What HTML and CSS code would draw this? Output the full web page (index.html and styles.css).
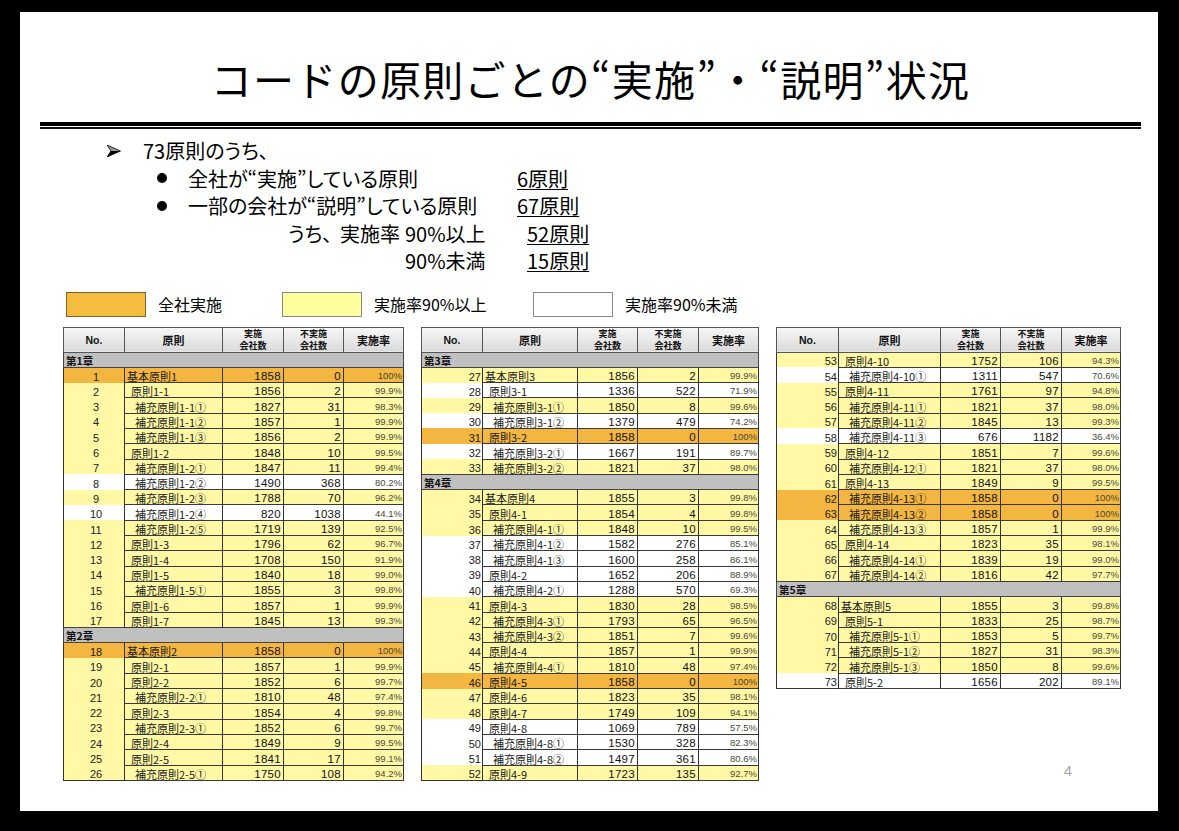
FILE: index.html
```html
<!DOCTYPE html>
<html lang="ja">
<head>
<meta charset="utf-8">
<title>コードの原則ごとの“実施”・“説明”状況</title>
<link rel="stylesheet" href="styles.css">
</head>
<body>
<div class="slide">
  <h1 class="title">コードの原則ごとの“実施”・“説明”状況</h1>
  <div class="rule"><div class="rule-thick"></div><div class="rule-thin"></div></div>

  <div class="summary">
    <div class="line l1"><span class="arrow"><svg width="14" height="12" viewBox="0 0 14 12" aria-hidden="true"><polygon points="0,0 13.5,6 4,6" fill="#9a9a9a"/><polygon points="4,6 13.5,6 0,12" fill="#000"/><polyline points="0,0 13.5,6 0,12 4,6 0,0" fill="none" stroke="#000" stroke-width="0.8"/></svg></span><span>73原則のうち、</span></div>
    <div class="line l2"><span class="dot"></span><span class="lbl">全社が“実施”している原則</span><span class="val">6原則</span></div>
    <div class="line l2"><span class="dot"></span><span class="lbl">一部の会社が“説明”している原則</span><span class="val">67原則</span></div>
    <div class="line l4"><span class="c1">うち、</span><span class="c2">実施率</span><span class="c3">90%以上</span><span class="val">52原則</span></div>
    <div class="line l5"><span class="c3">90%未満</span><span class="val">15原則</span></div>
  </div>

  <div class="legend">
    <div class="lg-item lg1"><span class="box box-o"></span><span class="lg-text">全社実施</span></div>
    <div class="lg-item lg2"><span class="box box-y"></span><span class="lg-text">実施率90%以上</span></div>
    <div class="lg-item lg3"><span class="box box-w"></span><span class="lg-text">実施率90%未満</span></div>
  </div>

  <div class="tables">
    <table class="tbl t1">
      <colgroup><col style="width:61px"><col style="width:98px"><col style="width:61px"><col style="width:60px"><col style="width:60px"></colgroup>
      <thead><tr><th class="h-no">No.</th><th class="h-nm">原則</th><th>実施<br>会社数</th><th>不実施<br>会社数</th><th class="h-rt">実施率</th></tr></thead>
      <tbody>
        <tr class="ch"><td colspan="5">第1章</td></tr>
        <tr class="o"><td class="no">1</td><td class="nm n0">基本原則1</td><td class="num">1858</td><td class="num">0</td><td class="pct">100%</td></tr>
        <tr class="y"><td class="no">2</td><td class="nm n1">原則1-1</td><td class="num">1856</td><td class="num">2</td><td class="pct">99.9%</td></tr>
        <tr class="y"><td class="no">3</td><td class="nm n2">補充原則1-1①</td><td class="num">1827</td><td class="num">31</td><td class="pct">98.3%</td></tr>
        <tr class="y"><td class="no">4</td><td class="nm n2">補充原則1-1②</td><td class="num">1857</td><td class="num">1</td><td class="pct">99.9%</td></tr>
        <tr class="y"><td class="no">5</td><td class="nm n2">補充原則1-1③</td><td class="num">1856</td><td class="num">2</td><td class="pct">99.9%</td></tr>
        <tr class="y"><td class="no">6</td><td class="nm n1">原則1-2</td><td class="num">1848</td><td class="num">10</td><td class="pct">99.5%</td></tr>
        <tr class="y"><td class="no">7</td><td class="nm n2">補充原則1-2①</td><td class="num">1847</td><td class="num">11</td><td class="pct">99.4%</td></tr>
        <tr class="w"><td class="no">8</td><td class="nm n2">補充原則1-2②</td><td class="num">1490</td><td class="num">368</td><td class="pct">80.2%</td></tr>
        <tr class="y"><td class="no">9</td><td class="nm n2">補充原則1-2③</td><td class="num">1788</td><td class="num">70</td><td class="pct">96.2%</td></tr>
        <tr class="w"><td class="no">10</td><td class="nm n2">補充原則1-2④</td><td class="num">820</td><td class="num">1038</td><td class="pct">44.1%</td></tr>
        <tr class="y"><td class="no">11</td><td class="nm n2">補充原則1-2⑤</td><td class="num">1719</td><td class="num">139</td><td class="pct">92.5%</td></tr>
        <tr class="y"><td class="no">12</td><td class="nm n1">原則1-3</td><td class="num">1796</td><td class="num">62</td><td class="pct">96.7%</td></tr>
        <tr class="y"><td class="no">13</td><td class="nm n1">原則1-4</td><td class="num">1708</td><td class="num">150</td><td class="pct">91.9%</td></tr>
        <tr class="y"><td class="no">14</td><td class="nm n1">原則1-5</td><td class="num">1840</td><td class="num">18</td><td class="pct">99.0%</td></tr>
        <tr class="y"><td class="no">15</td><td class="nm n2">補充原則1-5①</td><td class="num">1855</td><td class="num">3</td><td class="pct">99.8%</td></tr>
        <tr class="y"><td class="no">16</td><td class="nm n1">原則1-6</td><td class="num">1857</td><td class="num">1</td><td class="pct">99.9%</td></tr>
        <tr class="y"><td class="no">17</td><td class="nm n1">原則1-7</td><td class="num">1845</td><td class="num">13</td><td class="pct">99.3%</td></tr>
        <tr class="ch"><td colspan="5">第2章</td></tr>
        <tr class="o"><td class="no">18</td><td class="nm n0">基本原則2</td><td class="num">1858</td><td class="num">0</td><td class="pct">100%</td></tr>
        <tr class="y"><td class="no">19</td><td class="nm n1">原則2-1</td><td class="num">1857</td><td class="num">1</td><td class="pct">99.9%</td></tr>
        <tr class="y"><td class="no">20</td><td class="nm n1">原則2-2</td><td class="num">1852</td><td class="num">6</td><td class="pct">99.7%</td></tr>
        <tr class="y"><td class="no">21</td><td class="nm n2">補充原則2-2①</td><td class="num">1810</td><td class="num">48</td><td class="pct">97.4%</td></tr>
        <tr class="y"><td class="no">22</td><td class="nm n1">原則2-3</td><td class="num">1854</td><td class="num">4</td><td class="pct">99.8%</td></tr>
        <tr class="y"><td class="no">23</td><td class="nm n2">補充原則2-3①</td><td class="num">1852</td><td class="num">6</td><td class="pct">99.7%</td></tr>
        <tr class="y"><td class="no">24</td><td class="nm n1">原則2-4</td><td class="num">1849</td><td class="num">9</td><td class="pct">99.5%</td></tr>
        <tr class="y"><td class="no">25</td><td class="nm n1">原則2-5</td><td class="num">1841</td><td class="num">17</td><td class="pct">99.1%</td></tr>
        <tr class="y"><td class="no">26</td><td class="nm n2">補充原則2-5①</td><td class="num">1750</td><td class="num">108</td><td class="pct">94.2%</td></tr>
      </tbody>
    </table>

    <table class="tbl t2">
      <colgroup><col style="width:61px"><col style="width:95px"><col style="width:60px"><col style="width:61px"><col style="width:60px"></colgroup>
      <thead><tr><th class="h-no">No.</th><th class="h-nm">原則</th><th>実施<br>会社数</th><th>不実施<br>会社数</th><th class="h-rt">実施率</th></tr></thead>
      <tbody>
        <tr class="ch"><td colspan="5">第3章</td></tr>
        <tr class="y"><td class="no">27</td><td class="nm n0">基本原則3</td><td class="num">1856</td><td class="num">2</td><td class="pct">99.9%</td></tr>
        <tr class="w"><td class="no">28</td><td class="nm n1">原則3-1</td><td class="num">1336</td><td class="num">522</td><td class="pct">71.9%</td></tr>
        <tr class="y"><td class="no">29</td><td class="nm n2">補充原則3-1①</td><td class="num">1850</td><td class="num">8</td><td class="pct">99.6%</td></tr>
        <tr class="w"><td class="no">30</td><td class="nm n2">補充原則3-1②</td><td class="num">1379</td><td class="num">479</td><td class="pct">74.2%</td></tr>
        <tr class="o"><td class="no">31</td><td class="nm n1">原則3-2</td><td class="num">1858</td><td class="num">0</td><td class="pct">100%</td></tr>
        <tr class="w"><td class="no">32</td><td class="nm n2">補充原則3-2①</td><td class="num">1667</td><td class="num">191</td><td class="pct">89.7%</td></tr>
        <tr class="y"><td class="no">33</td><td class="nm n2">補充原則3-2②</td><td class="num">1821</td><td class="num">37</td><td class="pct">98.0%</td></tr>
        <tr class="ch"><td colspan="5">第4章</td></tr>
        <tr class="y"><td class="no">34</td><td class="nm n0">基本原則4</td><td class="num">1855</td><td class="num">3</td><td class="pct">99.8%</td></tr>
        <tr class="y"><td class="no">35</td><td class="nm n1">原則4-1</td><td class="num">1854</td><td class="num">4</td><td class="pct">99.8%</td></tr>
        <tr class="y"><td class="no">36</td><td class="nm n2">補充原則4-1①</td><td class="num">1848</td><td class="num">10</td><td class="pct">99.5%</td></tr>
        <tr class="w"><td class="no">37</td><td class="nm n2">補充原則4-1②</td><td class="num">1582</td><td class="num">276</td><td class="pct">85.1%</td></tr>
        <tr class="w"><td class="no">38</td><td class="nm n2">補充原則4-1③</td><td class="num">1600</td><td class="num">258</td><td class="pct">86.1%</td></tr>
        <tr class="w"><td class="no">39</td><td class="nm n1">原則4-2</td><td class="num">1652</td><td class="num">206</td><td class="pct">88.9%</td></tr>
        <tr class="w"><td class="no">40</td><td class="nm n2">補充原則4-2①</td><td class="num">1288</td><td class="num">570</td><td class="pct">69.3%</td></tr>
        <tr class="y"><td class="no">41</td><td class="nm n1">原則4-3</td><td class="num">1830</td><td class="num">28</td><td class="pct">98.5%</td></tr>
        <tr class="y"><td class="no">42</td><td class="nm n2">補充原則4-3①</td><td class="num">1793</td><td class="num">65</td><td class="pct">96.5%</td></tr>
        <tr class="y"><td class="no">43</td><td class="nm n2">補充原則4-3②</td><td class="num">1851</td><td class="num">7</td><td class="pct">99.6%</td></tr>
        <tr class="y"><td class="no">44</td><td class="nm n1">原則4-4</td><td class="num">1857</td><td class="num">1</td><td class="pct">99.9%</td></tr>
        <tr class="y"><td class="no">45</td><td class="nm n2">補充原則4-4①</td><td class="num">1810</td><td class="num">48</td><td class="pct">97.4%</td></tr>
        <tr class="o"><td class="no">46</td><td class="nm n1">原則4-5</td><td class="num">1858</td><td class="num">0</td><td class="pct">100%</td></tr>
        <tr class="y"><td class="no">47</td><td class="nm n1">原則4-6</td><td class="num">1823</td><td class="num">35</td><td class="pct">98.1%</td></tr>
        <tr class="y"><td class="no">48</td><td class="nm n1">原則4-7</td><td class="num">1749</td><td class="num">109</td><td class="pct">94.1%</td></tr>
        <tr class="w"><td class="no">49</td><td class="nm n1">原則4-8</td><td class="num">1069</td><td class="num">789</td><td class="pct">57.5%</td></tr>
        <tr class="w"><td class="no">50</td><td class="nm n2">補充原則4-8①</td><td class="num">1530</td><td class="num">328</td><td class="pct">82.3%</td></tr>
        <tr class="w"><td class="no">51</td><td class="nm n2">補充原則4-8②</td><td class="num">1497</td><td class="num">361</td><td class="pct">80.6%</td></tr>
        <tr class="y"><td class="no">52</td><td class="nm n1">原則4-9</td><td class="num">1723</td><td class="num">135</td><td class="pct">92.7%</td></tr>
      </tbody>
    </table>

    <div class="col3">
      <table class="tbl t3">
        <colgroup><col style="width:62px"><col style="width:102px"><col style="width:60px"><col style="width:61px"><col style="width:59px"></colgroup>
        <thead><tr><th class="h-no">No.</th><th class="h-nm">原則</th><th>実施<br>会社数</th><th>不実施<br>会社数</th><th class="h-rt">実施率</th></tr></thead>
        <tbody>
          <tr class="y"><td class="no">53</td><td class="nm n1">原則4-10</td><td class="num">1752</td><td class="num">106</td><td class="pct">94.3%</td></tr>
          <tr class="w"><td class="no">54</td><td class="nm n2">補充原則4-10①</td><td class="num">1311</td><td class="num">547</td><td class="pct">70.6%</td></tr>
          <tr class="y"><td class="no">55</td><td class="nm n1">原則4-11</td><td class="num">1761</td><td class="num">97</td><td class="pct">94.8%</td></tr>
          <tr class="y"><td class="no">56</td><td class="nm n2">補充原則4-11①</td><td class="num">1821</td><td class="num">37</td><td class="pct">98.0%</td></tr>
          <tr class="y"><td class="no">57</td><td class="nm n2">補充原則4-11②</td><td class="num">1845</td><td class="num">13</td><td class="pct">99.3%</td></tr>
          <tr class="w"><td class="no">58</td><td class="nm n2">補充原則4-11③</td><td class="num">676</td><td class="num">1182</td><td class="pct">36.4%</td></tr>
          <tr class="y"><td class="no">59</td><td class="nm n1">原則4-12</td><td class="num">1851</td><td class="num">7</td><td class="pct">99.6%</td></tr>
          <tr class="y"><td class="no">60</td><td class="nm n2">補充原則4-12①</td><td class="num">1821</td><td class="num">37</td><td class="pct">98.0%</td></tr>
          <tr class="y"><td class="no">61</td><td class="nm n1">原則4-13</td><td class="num">1849</td><td class="num">9</td><td class="pct">99.5%</td></tr>
          <tr class="o"><td class="no">62</td><td class="nm n2">補充原則4-13①</td><td class="num">1858</td><td class="num">0</td><td class="pct">100%</td></tr>
          <tr class="o"><td class="no">63</td><td class="nm n2">補充原則4-13②</td><td class="num">1858</td><td class="num">0</td><td class="pct">100%</td></tr>
          <tr class="y"><td class="no">64</td><td class="nm n2">補充原則4-13③</td><td class="num">1857</td><td class="num">1</td><td class="pct">99.9%</td></tr>
          <tr class="y"><td class="no">65</td><td class="nm n1">原則4-14</td><td class="num">1823</td><td class="num">35</td><td class="pct">98.1%</td></tr>
          <tr class="y"><td class="no">66</td><td class="nm n2">補充原則4-14①</td><td class="num">1839</td><td class="num">19</td><td class="pct">99.0%</td></tr>
          <tr class="y"><td class="no">67</td><td class="nm n2">補充原則4-14②</td><td class="num">1816</td><td class="num">42</td><td class="pct">97.7%</td></tr>
          <tr class="ch"><td colspan="5">第5章</td></tr>
          <tr class="y"><td class="no">68</td><td class="nm n0">基本原則5</td><td class="num">1855</td><td class="num">3</td><td class="pct">99.8%</td></tr>
          <tr class="y"><td class="no">69</td><td class="nm n1">原則5-1</td><td class="num">1833</td><td class="num">25</td><td class="pct">98.7%</td></tr>
          <tr class="y"><td class="no">70</td><td class="nm n2">補充原則5-1①</td><td class="num">1853</td><td class="num">5</td><td class="pct">99.7%</td></tr>
          <tr class="y"><td class="no">71</td><td class="nm n2">補充原則5-1②</td><td class="num">1827</td><td class="num">31</td><td class="pct">98.3%</td></tr>
          <tr class="y"><td class="no">72</td><td class="nm n2">補充原則5-1③</td><td class="num">1850</td><td class="num">8</td><td class="pct">99.6%</td></tr>
          <tr class="w"><td class="no">73</td><td class="nm n1">原則5-2</td><td class="num">1656</td><td class="num">202</td><td class="pct">89.1%</td></tr>
        </tbody>
      </table>
      <div class="pgnum">4</div>
    </div>
  </div>
</div>
</body>
</html>
```

FILE: styles.css
```css
html, body {
  margin: 0;
  padding: 0;
}
body {
  background: #000;
  width: 1179px;
  height: 831px;
  overflow: hidden;
}
.slide {
  margin: 12px 0 0 20px;
  width: 1138px;
  height: 799px;
  background: #fff;
  box-sizing: border-box;
  padding: 42px 17px 0 20px;
  display: flex;
  flex-direction: column;
  font-family: "Noto Sans CJK JP", sans-serif;
  color: #000;
}
.title {
  margin: 0;
  font-size: 41px;
  line-height: 48px;
  font-weight: 400;
  text-align: center;
  letter-spacing: 1.3px;
}
.rule {
  margin-top: 20px;
}
.rule-thick {
  height: 4px;
  background: #000;
}
.rule-thin {
  height: 1.5px;
  margin-top: 1px;
  background: #111;
}

/* summary bullets */
.summary {
  margin-top: 8.5px;
  font-size: 20px;
  line-height: 27.5px;
  font-feature-settings: "palt";
}
.line {
  display: flex;
  align-items: center;
  white-space: nowrap;
  height: 27.5px;
}
.line > span { flex-shrink: 0; }
.l1 { padding-left: 67px; }
.arrow {
  width: 36px;
  display: flex;
  align-items: center;
}
.arrow svg { display: block; }
.l2 { padding-left: 117px; }
.dot {
  width: 10px;
  height: 10px;
  border-radius: 50%;
  background: #000;
  margin-right: 21px;
}
.lbl { width: 329px; }
.val { text-decoration: underline; text-decoration-thickness: 1px; text-underline-offset: 2px; }
.l4 { padding-left: 248px; }
.c1 { width: 52px; }
.c2 { width: 65px; }
.c3 { width: 122px; }
.l5 { padding-left: 365px; }

/* legend */
.legend {
  margin-top: 17px;
  display: flex;
  padding-left: 26px;
  height: 25px;
  align-items: center;
  font-size: 16px;
}
.lg-item {
  display: flex;
  align-items: center;
}
.lg1 { width: 216px; }
.lg2 { width: 251px; }
.box {
  width: 80px;
  height: 25px;
  box-sizing: border-box;
  border: 1.5px solid #777;
}
.box-o { background: #f4bd3d; border-color: #7a6230; }
.box-y { background: #ffff9e; border-color: #888; }
.box-w { background: #fff; border-color: #888; }
.lg-text { margin-left: 12px; }

/* tables */
.tables {
  margin-top: 10px;
  display: flex;
  align-items: stretch;
  padding-left: 23px;
  gap: 17px;
}
.col3 {
  display: flex;
  flex-direction: column;
}
.pgnum {
  margin-top: auto;
  text-align: right;
  padding-right: 49px;
  margin-bottom: 2px;
  color: #a6a6a6;
  font-family: "Liberation Sans", sans-serif;
  font-size: 15px;
  line-height: 16px;
}
.tbl {
  border-collapse: collapse;
  table-layout: fixed;
  border: 1px solid #333;
  font-family: "Liberation Sans", "Noto Sans CJK JP", sans-serif;
  color: #111;
}
.tbl th {
  height: 24px;
  padding: 0;
  background: linear-gradient(#f7f7f7, #dadada);
  border: 1px solid #555;
  font-family: "Noto Sans CJK JP", sans-serif;
  font-weight: 700;
  font-size: 9px;
  line-height: 12px;
  text-align: center;
  vertical-align: middle;
}
.tbl th.h-no { font-family: "Liberation Sans", sans-serif; font-size: 10.5px; }
.tbl th.h-nm, .tbl th.h-rt { font-size: 11px; }
.tbl td {
  height: 14.3px;
  padding: 0 2px;
  font-size: 11.5px;
  line-height: 12px;
  white-space: nowrap;
  overflow: hidden;
  border-left: 1px solid #333;
  border-right: 1px solid #333;
  border-bottom: 1px solid #3a3a3a;
  vertical-align: bottom;
}
.tbl td.no {
  border-bottom: none;
  font-size: 11px;
  color: #222;
}
.t1 td.no { text-align: center; padding-left: 6px; }
.t2 td.no, .t3 td.no { text-align: right; padding-right: 1px; }
.tbl td.nm {
  font-family: "Noto Sans CJK JP", sans-serif;
  font-size: 11px;
  color: #1a1a1a;
}
.nm.n0 { padding-left: 2px; }
.nm.n1 { padding-left: 6px; }
.nm.n2 { padding-left: 10px; }
.tbl td.num {
  text-align: right;
  letter-spacing: 0.3px;
}
.tbl td.pct {
  text-align: right;
  font-size: 9.5px;
  color: #4a4a35;
  padding-right: 1px;
}
tr.o td { background: #f3b640; }
tr.y td { background: #fff9a6; }
tr.w td { background: #fff; }
tr.ch td {
  background: #c0c0c0;
  border: 1px solid #444;
  font-family: "Noto Sans CJK JP", sans-serif;
  font-weight: 700;
  font-size: 10.5px;
  padding-left: 2px;
  text-align: left;
}
```
